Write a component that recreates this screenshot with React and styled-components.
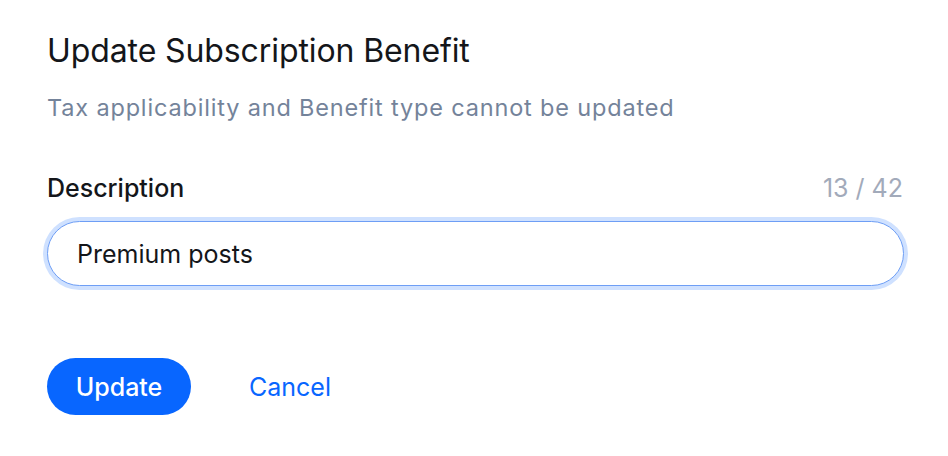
import React, { useState } from "react";
import styled, { createGlobalStyle } from "styled-components";

const Global = createGlobalStyle`
  html, body { margin: 0; padding: 0; background: #ffffff; }
  body { font-family: Inter, "Noto Sans", sans-serif; -webkit-font-smoothing: antialiased; }
  * { box-sizing: border-box; }
`;

const Dialog = styled.div`
  width: 948px;
  height: 456px;
  padding: 31px 43px 0 47px;
  display: flex;
  flex-direction: column;
`;

const Title = styled.h1`
  margin: 0;
  font-size: 32px;
  line-height: 40px;
  font-weight: 400;
  color: #14161a;
  letter-spacing: -0.1px;
`;

const Subtitle = styled.p`
  margin: 22px 0 0;
  font-size: 23.5px;
  line-height: 30px;
  color: #74839a;
  letter-spacing: 0.83px;
`;

const LabelRow = styled.div`
  margin-top: 49px;
  display: flex;
  justify-content: space-between;
  align-items: baseline;
  padding-right: 2px;
`;

const Label = styled.label`
  font-size: 25px;
  line-height: 32px;
  font-weight: 500;
  color: #14161a;
`;

const Counter = styled.span`
  font-size: 25px;
  line-height: 32px;
  color: #a2aaba;
`;

const InputWrap = styled.div`
  margin-top: 17px;
  width: 857px;
`;

const Input = styled.input`
  display: block;
  width: 100%;
  height: 65px;
  border-radius: 33px;
  border: 1px solid #6e9ef5;
  box-shadow: 0 0 0 4px #cfe1ff;
  padding: 0 29px;
  font-family: inherit;
  font-size: 25px;
  color: #14161a;
  outline: none;
  background: #fff;
`;

const Actions = styled.div`
  margin-top: 72px;
  display: flex;
  align-items: center;
  gap: 58px;
`;

const PrimaryButton = styled.button`
  height: 57px;
  width: 144px;
  padding: 0;
  border: none;
  border-radius: 29px;
  background: #0866ff;
  color: #fff;
  font-family: inherit;
  font-size: 25px;
  font-weight: 500;
  cursor: pointer;
`;

const LinkButton = styled.button`
  border: none;
  background: none;
  padding: 0;
  color: #0866ff;
  font-family: inherit;
  font-size: 25px;
  font-weight: 400;
  cursor: pointer;
`;

export default function App() {
  const [value, setValue] = useState("Premium posts");
  return (
    <>
      <Global />
      <Dialog>
        <Title>Update Subscription Benefit</Title>
        <Subtitle>Tax applicability and Benefit type cannot be updated</Subtitle>
        <LabelRow>
          <Label htmlFor="desc">Description</Label>
          <Counter>{value.length} / 42</Counter>
        </LabelRow>
        <InputWrap>
          <Input id="desc" value={value} maxLength={42} onChange={(e) => setValue(e.target.value)} />
        </InputWrap>
        <Actions>
          <PrimaryButton>Update</PrimaryButton>
          <LinkButton>Cancel</LinkButton>
        </Actions>
      </Dialog>
    </>
  );
}
